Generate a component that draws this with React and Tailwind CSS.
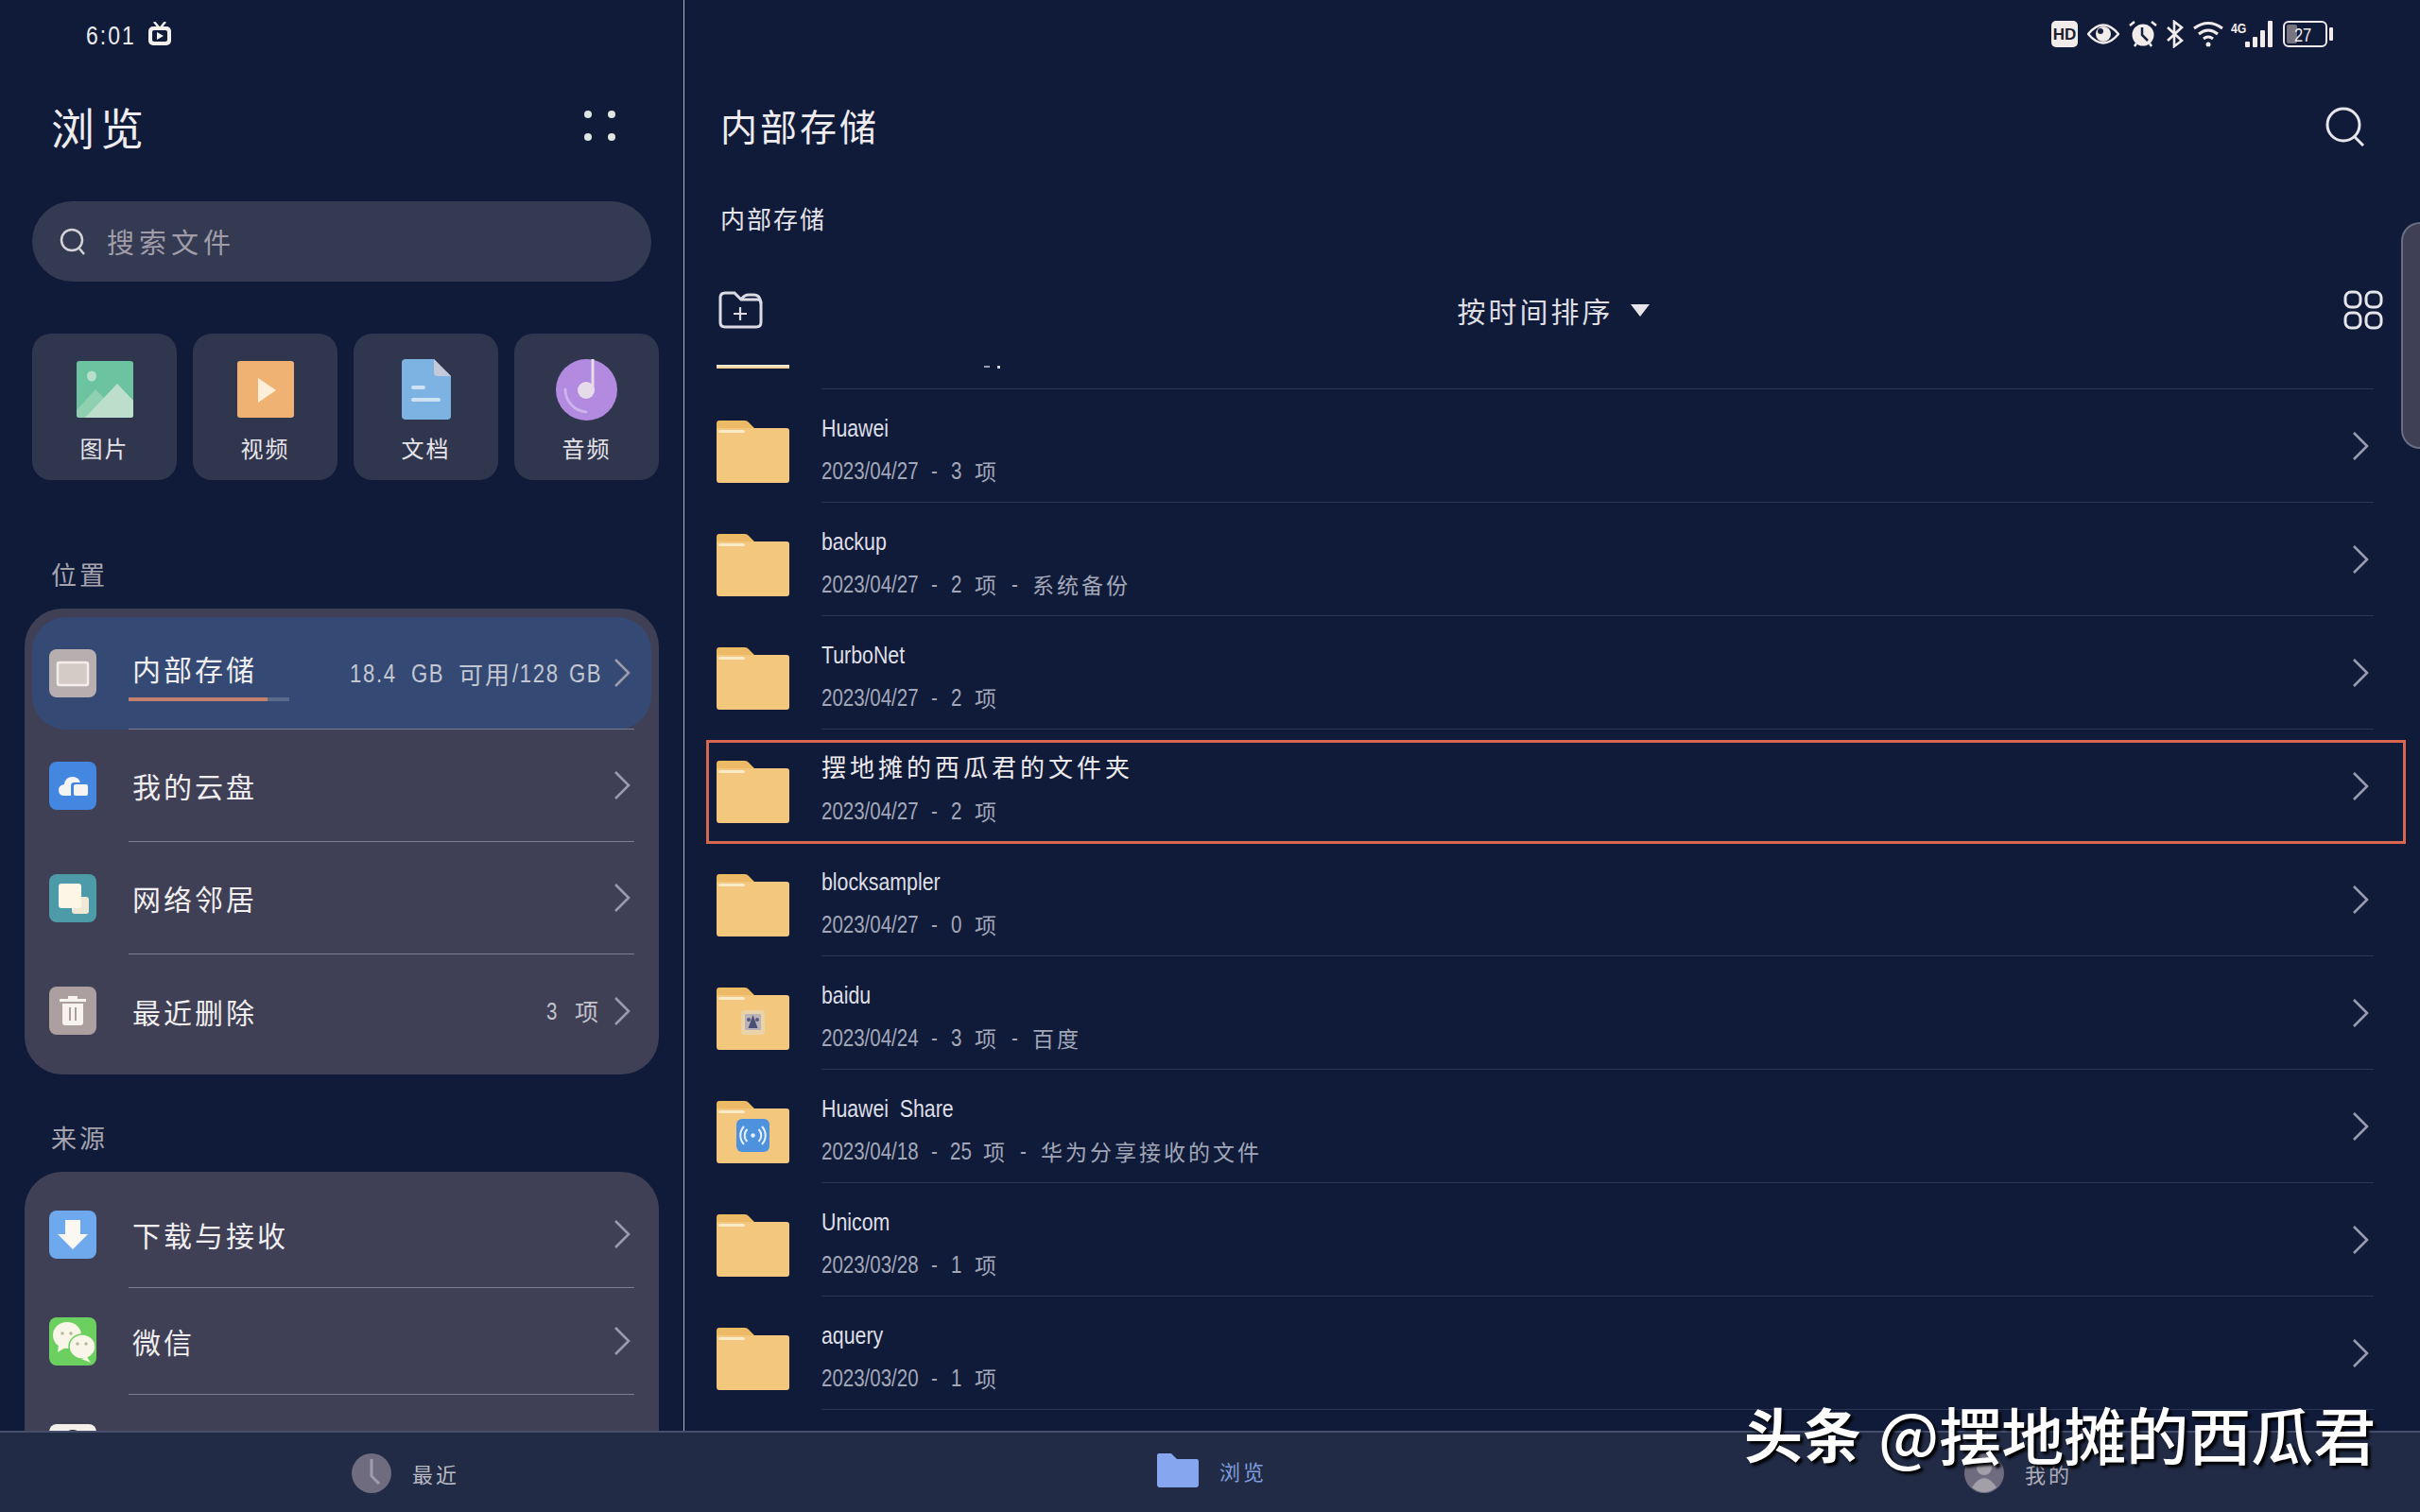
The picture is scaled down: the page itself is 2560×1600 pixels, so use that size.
import React from "react";

const Chevron = ({ className = "" }) => (
  <svg width="20" height="32" viewBox="0 0 20 32" fill="none" className={className}>
    <path d="M3 2 L17 16 L3 30" stroke="#9a9cad" strokeWidth="2.6" />
  </svg>
);

const Folder = ({ badge }) => (
  <svg width="77" height="66" viewBox="0 0 77 66" className="shrink-0 mt-[33px]">
    <path d="M3 0H30Q33 0 35 3L40 8H40V20H0V3Q0 0 3 0Z" fill="#ecb964" />
    <path d="M0 8H74Q77 8 77 11V63Q77 66 74 66H3Q0 66 0 63Z" fill="#f3c87e" />
    <rect x="2" y="10" width="28" height="3" rx="1.5" fill="#fbe9c8" />
    {badge === "baidu" && (
      <g>
        <rect x="26" y="24" width="25" height="26" rx="4" fill="#ead3a9" />
        <rect x="30" y="28" width="17" height="17" fill="#b9b2b6" />
        <path d="M38.5 29l5 14h-10z" fill="#4a4f74" />
        <circle cx="34" cy="34" r="2" fill="#54597d" />
        <circle cx="43" cy="34" r="2" fill="#54597d" />
      </g>
    )}
    {badge === "share" && (
      <g>
        <rect x="21" y="19" width="35" height="35" rx="6" fill="#4e92dd" />
        <circle cx="38.5" cy="36.5" r="2.2" fill="#e8f1fb" />
        <path d="M32.5 30a9 9 0 0 0 0 13M44.500 30a9 9 0 0 1 0 13M29 27a14 14 0 0 0 0 19M48 27a14 14 0 0 1 0 19" fill="none" stroke="#e8f1fb" strokeWidth="2" />
      </g>
    )}
  </svg>
);

// Condensed Latin: no narrow family is installed, so the glyphs are squeezed inside a fixed-width box.
const Nar = ({ box = "", children }) => (
  <span className={`inline-block whitespace-pre ${box}`}>
    <span className="inline-block origin-left scale-x-[0.82] font-['Liberation_Sans','Noto_Sans_CJK_SC',sans-serif]">{children}</span>
  </span>
);

const Cjk = ({ children, className = "" }) => <span className={`tracking-[3px] text-[23px] ${className}`}>{children}</span>;

const FileRow = ({ name, cjkName, date, count, desc, badge, marked }) => (
  <div className="relative flex h-[120px] pl-[34px] pr-[49px] gap-[34px]">
    <Folder badge={badge} />
    <div className="flex-1 border-b border-[#2c3552] flex justify-between items-center">
      <div className="flex flex-col self-start pt-[22px]">
        {cjkName ? (
          <div className="h-[34px] leading-[34px] text-[26px] tracking-[4px] text-[#ece9ea]">{name}</div>
        ) : (
          <div className="h-[34px] leading-[34px] text-[26px] text-[#dfdfe6] [word-spacing:7px]"><Nar>{name}</Nar></div>
        )}
        <div className="mt-[13px] h-[34px] flex items-center text-[25px] text-[#a2a7b8]">
          <Nar box="w-[103px]">{date}</Nar>
          <span className="ml-[13px] w-[9px]"><Nar>-</Nar></span>
          <span className={count.length > 1 ? "ml-[11px] w-[22px]" : "ml-[12px] w-[12px]"}><Nar>{count}</Nar></span>
          <Cjk className="ml-[13px]">项</Cjk>
          {desc ? <span className="ml-[13px] w-[9px]"><Nar>-</Nar></span> : null}
          {desc ? <Cjk className="ml-[13px]">{desc}</Cjk> : null}
        </div>
      </div>
      <Chevron className="mr-[4px]" />
    </div>
    {marked && <div className="absolute left-[23px] top-[11px] w-[1798px] h-[110px] border-[3px] border-[#d6664e]" />}
  </div>
);

const files = [
  { name: "Huawei", date: "2023/04/27", count: "3" },
  { name: "backup", date: "2023/04/27", count: "2", desc: "系统备份" },
  { name: "TurboNet", date: "2023/04/27", count: "2" },
  { name: "摆地摊的西瓜君的文件夹", cjkName: true, date: "2023/04/27", count: "2", marked: true },
  { name: "blocksampler", date: "2023/04/27", count: "0" },
  { name: "baidu", date: "2023/04/24", count: "3", desc: "百度", badge: "baidu" },
  { name: "Huawei Share", date: "2023/04/18", count: "25", desc: "华为分享接收的文件", badge: "share" },
  { name: "Unicom", date: "2023/03/28", count: "1" },
  { name: "aquery", date: "2023/03/20", count: "1" },
];

const CardIcon = ({ kind }) => {
  if (kind === "image")
    return (
      <svg width="60" height="60" viewBox="0 0 60 60">
        <rect width="60" height="60" rx="3" fill="#6cc3a0" />
        <ellipse cx="16" cy="16" rx="5" ry="5.500" fill="#b7e0cb" />
        <path d="M0 52L20 30L30 40L43 24L60 42V57Q60 60 57 60H3Q0 60 0 57Z" fill="#8fd0b0" />
        <path d="M9 60L43 24L60 42V57Q60 60 57 60Z" fill="#bcdecb" />
      </svg>
    );
  if (kind === "video")
    return (
      <svg width="60" height="60" viewBox="0 0 60 60">
        <rect width="60" height="60" rx="3" fill="#f0b273" />
        <path d="M22 18L41 31L22 44Z" fill="#fdeeda" />
      </svg>
    );
  if (kind === "doc")
    return (
      <svg width="52" height="64" viewBox="0 0 52 64">
        <path d="M4 0H34L52 18V60Q52 64 48 64H4Q0 64 0 60V4Q0 0 4 0Z" fill="#7db3e3" />
        <path d="M34 0L52 18H38Q34 18 34 14Z" fill="#c5c9da" />
        <rect x="10" y="28" width="15" height="4" rx="2" fill="#cfe2f4" />
        <rect x="10" y="41" width="31" height="4" rx="2" fill="#cfe2f4" />
      </svg>
    );
  return (
    <svg width="65" height="65" viewBox="0 0 65 65">
      <circle cx="32.500" cy="32.500" r="32.500" fill="#b28ae0" />
      <path d="M39 0V32" stroke="#e6dbe8" strokeWidth="3" />
      <circle cx="32" cy="33" r="9" fill="#e6dbe8" />
      <path d="M10 32A24 24 0 0 0 32 56" fill="none" stroke="#cdb2ec" strokeWidth="3" strokeLinecap="round" />
    </svg>
  );
};

const Card = ({ kind, label }) => (
  <div className="w-[153px] h-[155px] rounded-[20px] bg-[#31364f] flex flex-col items-center">
    <div className="h-[60px] mt-[29px] flex items-center justify-center"><CardIcon kind={kind} /></div>
    <div className="mt-[17px] text-[24px] leading-[30px] tracking-[2px] text-[#e6e4e8]">{label}</div>
  </div>
);

const Tile = ({ color, children }) => (
  <div className={`w-[50px] h-[51px] rounded-[8px] shrink-0 flex items-center justify-center ${color}`}>
    <svg width="50" height="51" viewBox="0 0 50 51">{children}</svg>
  </div>
);

const StorageIcon = () => (
  <Tile color="bg-[#b7aeb0]">
    <rect x="9" y="14" width="32" height="24" rx="2" fill="#d4cbc6" stroke="#f4eeea" strokeWidth="2.500" />
  </Tile>
);
const CloudIcon = () => (
  <Tile color="bg-[#4387e0]">
    <path d="M16 36Q10 36 10 30Q10 25 16 24Q17 16 25 16Q31 16 33 22H26Q23 22 23 26V36Z" fill="#f6f4f2" />
    <rect x="26" y="24" width="15" height="12" rx="2" fill="#f6f4f2" />
  </Tile>
);
const NetIcon = () => (
  <Tile color="bg-[#4d9aa8]">
    <rect x="24" y="24" width="18" height="18" rx="3" fill="#efe8d6" />
    <rect x="10" y="10" width="24" height="26" rx="3" fill="#fbf6e6" />
  </Tile>
);
const TrashIcon = () => (
  <Tile color="bg-[#ab9fa0]">
    <path d="M11 13H39V16H11ZM20 10H30V13H20Z" fill="#f7f3ef" />
    <path d="M14 18H36V38Q36 41 33 41H17Q14 41 14 38ZM21 22V36H23V22ZM27 22V36H29V22Z" fill="#f7f3ef" fillRule="evenodd" />
  </Tile>
);
const DownIcon = () => (
  <Tile color="bg-[#6ea9ee]">
    <path d="M17 10H33V25H41L25 41L9 25H17Z" fill="#fbf8f2" />
  </Tile>
);
const WechatIcon = () => (
  <Tile color="bg-[#6cd060]">
    <ellipse cx="19" cy="19" rx="15" ry="14" fill="#f9f5e8" />
    <path d="M10 29L9 37L17 32Z" fill="#f9f5e8" />
    <circle cx="14" cy="17" r="1.700" fill="#b7b79a" />
    <circle cx="23" cy="17" r="1.700" fill="#b7b79a" />
    <ellipse cx="35" cy="31" rx="14" ry="13" fill="#f9f5e8" stroke="#6cd060" strokeWidth="1.500" />
    <path d="M40 42L44 48L34 44Z" fill="#f9f5e8" />
    <circle cx="30" cy="28" r="1.700" fill="#b7b79a" />
    <circle cx="39" cy="28" r="1.700" fill="#b7b79a" />
  </Tile>
);
const PeekIcon = () => (
  <Tile color="bg-[#f3f0ec]">
    <circle cx="25" cy="17" r="11" fill="#2a2a33" />
  </Tile>
);

const Row = ({ icon, label, right, height, active, last, shift }) => (
  <div className={`mx-[8px] px-[18px] flex items-stretch gap-[34px] ${height} ${active ? "bg-[#344a74] rounded-[36px]" : ""}`}>
    <div className={`flex items-center ${shift ? "pt-[10px]" : ""}`}>{icon}</div>
    <div className={`flex-1 flex items-center justify-between ${last ? "" : "border-b border-[#7b7e92]"} ${shift ? "pt-[10px]" : ""}`}>
      {active ? (
        <div className="self-start pt-[36px] w-[170px]">
          <div className="pl-[4px] text-[30px] leading-[36px] tracking-[3px] text-[#f0eeee] whitespace-nowrap">{label}</div>
          <div className="mt-[13px] h-[4px] bg-[#5a6a88]"><div className="h-full w-[147px] bg-[#c47f6a]" /></div>
        </div>
      ) : (
        <div className="pl-[4px] text-[30px] leading-[36px] tracking-[3px] text-[#f0eeee] whitespace-nowrap">{label}</div>
      )}
      <div className="flex items-center gap-[12px]">
        {right}
        <Chevron className="mr-[3px]" />
      </div>
    </div>
  </div>
);

const SectionLabel = ({ children, className }) => (
  <div className={`pl-[54px] text-[27px] leading-[40px] tracking-[3px] text-[#a5a4ae] ${className}`}>{children}</div>
);

const Sidebar = () => (
  <div className="w-[724px] shrink-0 border-r border-[#aeb2c2] overflow-hidden">
    <div className="h-[72px] pl-[91px] flex items-center gap-[12px]">
      <span className="w-[53px] text-[28px] tracking-[2.500px] text-[#ececec]"><Nar>6:01</Nar></span>
      <svg width="26" height="26" viewBox="0 0 26 26">
        <path d="M7 0L12 6M19 0L14 6" stroke="#f3f0ec" strokeWidth="2.400" />
        <rect x="1" y="5" width="24" height="20" rx="5" fill="#f3f0ec" />
        <rect x="5" y="9" width="16" height="12" rx="2" fill="#101b3a" />
        <path d="M10 11L17 15L10 19Z" fill="#f3f0ec" />
      </svg>
    </div>
    <div className="pt-[37px] pb-[2px] pl-[54px] pr-[72px] flex items-center justify-between h-[87px]">
      <div className="text-[46px] leading-[48px] tracking-[6px] text-[#eeecef]">浏览</div>
      <div className="grid grid-cols-2 gap-x-[17px] gap-y-[16px]">
        <div className="w-[8px] h-[8px] rounded-full bg-[#dfe5e0]" />
        <div className="w-[8px] h-[8px] rounded-full bg-[#dfe5e0]" />
        <div className="w-[8px] h-[8px] rounded-full bg-[#dfe5e0]" />
        <div className="w-[8px] h-[8px] rounded-full bg-[#dfe5e0]" />
      </div>
    </div>
    <div className="mt-[54px] ml-[34px] w-[655px] h-[85px] rounded-full bg-[#333a52] flex items-center pl-[29px] gap-[22px]">
      <svg width="28" height="30" viewBox="0 0 28 30" fill="none" stroke="#d3d3d8" strokeWidth="2.500">
        <circle cx="13" cy="13" r="11" />
        <path d="M21 22L26 28" />
      </svg>
      <div className="text-[29px] tracking-[5px] text-[#a09ca8]">搜索文件</div>
    </div>
    <div className="mt-[55px] ml-[34px] flex gap-[17px]">
      <Card kind="image" label="图片" />
      <Card kind="video" label="视频" />
      <Card kind="doc" label="文档" />
      <Card kind="audio" label="音频" />
    </div>
    <SectionLabel className="mt-[80px]">位置</SectionLabel>
    <div className="mt-[16px] ml-[26px] w-[671px] rounded-[40px] bg-[#3f4056] pt-[9px] pb-[8px]">
      <Row active height="h-[119px]" icon={<StorageIcon />} label="内部存储"
        right={
          <span className="flex items-center text-[27px] tracking-[2px] text-[#c3c7d2]">
            <Nar box="w-[50px]">18.4</Nar>
            <span className="ml-[15px] w-[34px]"><Nar>GB</Nar></span>
            <span className="ml-[16px] text-[26px] tracking-[2px]">可用</span>
            <span className="ml-[1px] w-[45px]"><Nar>/128</Nar></span>
            <span className="ml-[15px] w-[34px]"><Nar>GB</Nar></span>
          </span>
        } />
      <Row height="h-[119px]" icon={<CloudIcon />} label="我的云盘" />
      <Row height="h-[119px]" icon={<NetIcon />} label="网络邻居" />
      <Row last height="h-[119px]" icon={<TrashIcon />} label="最近删除"
        right={
          <span className="flex items-center text-[25px] text-[#c3c3cb]">
            <span className="w-[12px]"><Nar>3</Nar></span>
            <span className="ml-[18px] mr-[3px]">项</span>
          </span>
        } />
    </div>
    <SectionLabel className="mt-[47px]">来源</SectionLabel>
    <div className="mt-[16px] ml-[26px] w-[671px] rounded-t-[40px] bg-[#3f4056]">
      <Row shift height="h-[123px]" icon={<DownIcon />} label="下载与接收" />
      <Row height="h-[113px]" icon={<WechatIcon />} label="微信" />
      <Row last height="h-[113px]" icon={<PeekIcon />} label="" />
    </div>
  </div>
);

const StatusIcons = () => (
  <div className="h-[72px] pr-[92px] flex items-center justify-end">
    <div className="w-[28px] h-[28px] rounded-[5px] bg-[#f1ecea] flex items-center justify-center text-[#1a1c2c] text-[17px] font-bold leading-none font-['Liberation_Sans',sans-serif]">HD</div>
    <svg width="34" height="22" viewBox="0 0 34 22" className="ml-[10px]">
      <path d="M1 11Q17 -8 33 11Q17 30 1 11Z" fill="none" stroke="#f1ecea" strokeWidth="2.500" />
      <circle cx="17" cy="11" r="8" fill="#f1ecea" />
      <circle cx="14" cy="8" r="3" fill="#1a2140" />
    </svg>
    <svg width="30" height="30" viewBox="0 0 30 30" className="ml-[10px]">
      <circle cx="15" cy="16" r="11.500" fill="#f1ecea" />
      <path d="M1 6L6 2M29 6L24 2M6 28L8 25M24 28L22 25" stroke="#f1ecea" strokeWidth="2.500" />
      <path d="M14 8V16L20 22" stroke="#1a2140" strokeWidth="2.500" fill="none" />
    </svg>
    <svg width="20" height="30" viewBox="0 0 20 30" fill="none" stroke="#f1ecea" strokeWidth="2.600" className="ml-[9px]">
      <path d="M2 8L17 22L9 28V2L17 8L2 22" />
    </svg>
    <svg width="32" height="28" viewBox="0 0 32 28" fill="none" stroke="#f1ecea" strokeWidth="3" className="ml-[9px]">
      <path d="M1 8Q16 -3 31 8M6 14Q16 6 26 14M11 19Q16 15 21 19" />
      <circle cx="16" cy="25" r="2.500" fill="#f1ecea" stroke="none" />
    </svg>
    <div className="ml-[8px] flex items-start h-[28px]">
      <span className="w-[15px] text-[15px] leading-[14px] font-bold text-[#f1ecea]"><Nar>4G</Nar></span>
      <svg width="29" height="28" viewBox="0 0 29 28" fill="#f1ecea">
        <rect x="0" y="22" width="5" height="6" rx="1" />
        <rect x="8" y="17" width="5" height="11" rx="1" />
        <rect x="16" y="10" width="5" height="18" rx="1" />
        <rect x="24" y="0" width="5" height="28" rx="1" />
      </svg>
    </div>
    <div className="ml-[11px] relative w-[47px] h-[28px] rounded-[6px] border-[2.500px] border-[#f1ecea] flex items-center pl-[10px] overflow-hidden">
      <div className="absolute left-[2px] top-[2px] bottom-[2px] w-[11px] bg-[#77757f] rounded-[2px]" />
      <span className="relative text-[20px] leading-none text-[#f1ecea]"><Nar>27</Nar></span>
    </div>
    <div className="ml-[2px] w-[4px] h-[14px] rounded-[1px] bg-[#f1ecea]" />
  </div>
);

const Main = () => (
  <div className="relative flex-1 min-w-0 flex flex-col">
    <StatusIcons />
    <div className="pt-[36px] pb-[4px] pl-[38px] pr-[58px] flex items-center justify-between">
      <div className="text-[39px] leading-[48px] tracking-[3px] text-[#eeecef]">内部存储</div>
      <svg width="42" height="42" viewBox="0 0 42 42" fill="none" stroke="#e6e5ea" strokeWidth="3" className="mt-[4px]">
        <circle cx="19" cy="19" r="17" />
        <path d="M31 32L40 41" />
      </svg>
    </div>
    <div className="mt-[53px] pl-[38px] text-[26px] leading-[36px] tracking-[2px] text-[#e6e5ea]">内部存储</div>
    <div className="mt-[49px] h-[60px] pl-[36px] pr-[39px] flex items-center justify-between">
      <svg width="47" height="40" viewBox="0 0 47 40" fill="none" stroke="#dcdce4" strokeWidth="3">
        <path d="M2 7Q2 2 7 2H17L24 9H42Q45 9 45 13V33Q45 38 40 38H7Q2 38 2 33Z" />
        <path d="M24 9Q27 4 32 4H38Q44 4 45 13" />
        <path d="M23 17V31M16 24H30" strokeWidth="2.200" />
      </svg>
      <div className="flex items-center gap-[18px]">
        <span className="text-[30px] tracking-[3px] text-[#dfdee2]">按时间排序</span>
        <svg width="20" height="13" viewBox="0 0 20 13"><path d="M0 0H20L10 13Z" fill="#e6e5ea" /></svg>
      </div>
      <svg width="42" height="42" viewBox="0 0 42 42" fill="none" stroke="#e6e5ea" strokeWidth="3">
        <rect x="2" y="2" width="16" height="16" rx="6" />
        <rect x="24" y="2" width="16" height="16" rx="6" />
        <rect x="2" y="24" width="16" height="16" rx="6" />
        <rect x="24" y="24" width="16" height="16" rx="6" />
      </svg>
    </div>
    <div className="mt-[26px] flex-1 min-h-0 overflow-hidden">
      <div className="h-[28px] pl-[34px] pr-[49px] flex gap-[34px]">
        <div className="w-[77px] h-[4px] mt-[2px] bg-gradient-to-b from-[#f5f0e6] to-[#f3c87e]" />
        <div className="flex-1 border-b border-[#2c3552] flex pl-[172px] pt-[3px] gap-[8px]">
          <div className="w-[6px] h-[2px] bg-[#9a9fb0]" />
          <div className="w-[3px] h-[3px] bg-[#d0d2da]" />
        </div>
      </div>
      {files.map((f) => <FileRow key={f.name} {...f} />)}
    </div>
    <div className="absolute right-0 top-[235px] w-[20px] h-[240px] rounded-l-[20px] bg-[#3f4056] border-l-2 border-y-2 border-[#6a6e85]" />
  </div>
);

const Tab = ({ icon, label, color, className }) => (
  <div className={`flex items-center absolute top-[22px] ${className}`}>
    {icon}
    <span className={`text-[22px] tracking-[3px] ${color}`}>{label}</span>
  </div>
);

const BottomBar = () => (
  <div className="relative h-[86px] shrink-0 bg-[#212b45] border-t-2 border-[#46506c]">
    <Tab className="left-[372px]" color="text-[#b9bac4]" label="最近"
      icon={<svg width="42" height="42" viewBox="0 0 42 42" className="mr-[22px]"><circle cx="21" cy="21" r="21" fill="#6f6c80" /><path d="M21 6V24L29 32" fill="none" stroke="#9f9dac" strokeWidth="3" /></svg>} />
    <Tab className="left-[1224px]" color="text-[#7f9cdc]" label="浏览"
      icon={<svg width="44" height="36" viewBox="0 0 44 36" className="mr-[22px]"><path d="M2 0H15L21 6H42Q44 6 44 9V33Q44 36 41 36H3Q0 36 0 33V2Q0 0 2 0Z" fill="#86a7f0" /></svg>} />
    <Tab className="left-[2078px]" color="text-[#aeaebb]" label="我的"
      icon={<svg width="42" height="42" viewBox="0 0 42 42" className="mr-[22px]"><circle cx="21" cy="21" r="21" fill="#6f6c80" /><circle cx="21" cy="15" r="8" fill="#a39fa8" /><path d="M8 36Q21 16 34 36Q21 46 8 36Z" fill="#a39fa8" /></svg>} />
  </div>
);

export default function App() {
  return (
    <div className="relative w-[2560px] h-[1600px] overflow-hidden bg-[#101b3a] flex flex-col font-['Noto_Sans_CJK_SC',sans-serif]">
      <div className="flex-1 min-h-0 flex">
        <Sidebar />
        <Main />
      </div>
      <BottomBar />
      <div className="absolute left-[1845px] top-[1476px] flex items-center whitespace-nowrap text-white font-medium [text-shadow:3px_3px_3px_#000]">
        <span className="text-[62px] leading-[80px] font-bold">头条</span>
        <span className="ml-[18px] text-[66px] leading-[80px]">@摆地摊的西瓜君</span>
      </div>
    </div>
  );
}
